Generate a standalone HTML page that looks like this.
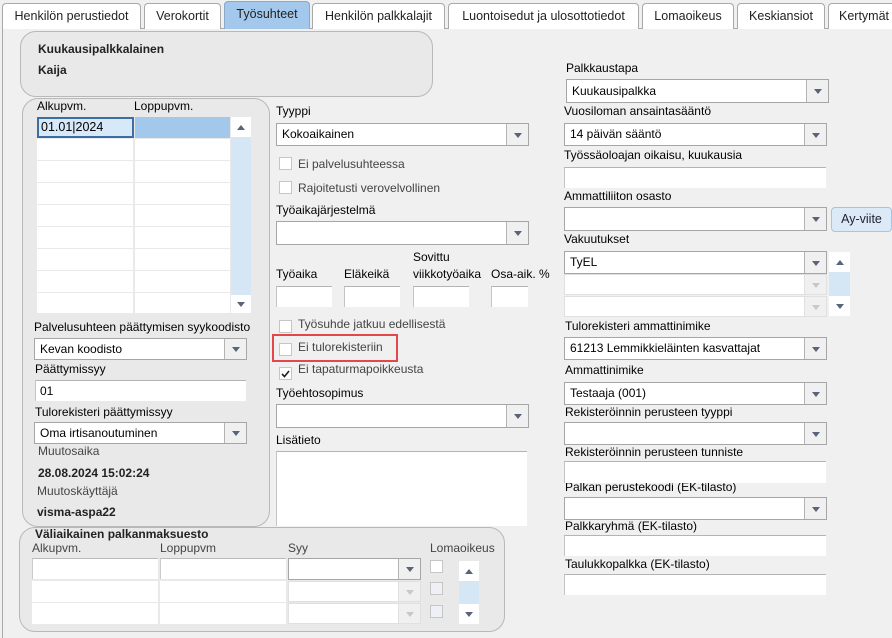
<!DOCTYPE html>
<html><head><meta charset="utf-8">
<style>
*{box-sizing:border-box;margin:0;padding:0}
body{width:892px;height:633px;overflow:hidden;background:#f0f0f0;font-family:"Liberation Sans",Arial,sans-serif;font-size:12px;color:#000;position:relative}
.a{position:absolute}
.tab{position:absolute;top:3px;height:26px;border:1px solid #a9a9a9;border-bottom:none;border-radius:4px 4px 0 0;background:#fff;text-align:center;line-height:24px;font-size:12.5px;color:#222}
.lbl{position:absolute;line-height:14px;white-space:nowrap}
.b{font-weight:bold;color:#222}
.g{color:#444}
.in{position:absolute;background:#fff;border-top:1px solid #b4b4b4;border-left:1px solid #c4c4c4}
.sel{position:absolute;background:#fff;border:1px solid #a6a6a6;padding-left:5px;line-height:20px;white-space:nowrap;overflow:hidden}
.sel::after{content:"";position:absolute;right:0;top:0;bottom:0;width:21px;border-left:1px solid #b4b4b4;background:#f0f0f0}
.sel::before{content:"";position:absolute;right:6px;top:50%;margin-top:-2px;border-left:4px solid transparent;border-right:4px solid transparent;border-top:5px solid #5a6478;z-index:2}
.sel.dis{border-color:#e0e0e0;}
.sel.dis::before{border-top-color:#c8c8c8}
.sel.dis::after{border-left-color:#e0e0e0}
.cb{position:absolute;width:13px;height:13px;background:#fff;border:1px solid #c6c6c6}
.cb.dis{background:#eef0f5}
.panel{position:absolute;background:#e9e9e9;border:1.5px solid #b8b8b8;border-radius:16px}
.cell{position:absolute;background:#fff}
.up::before,.dn::before{content:"";position:absolute;left:50%;margin-left:-4px;top:50%;margin-top:-2px;border-left:4px solid transparent;border-right:4px solid transparent}
.up::before{border-bottom:5px solid #5a6478}
.dn::before{border-top:5px solid #5a6478}
</style></head><body>
<div class="a" style="left:2px;top:28px;width:892px;height:610px;border-left:1px solid #a9a9a9;border-top:1px solid #a9a9a9"></div>
<div class="tab" style="left:2px;width:139px">Henkilön perustiedot</div>
<div class="tab" style="left:144px;width:77px">Verokortit</div>
<div class="tab" style="left:224px;width:86px;background:#a3c8ec;border-color:#8aa8c8;top:1px;height:28px">Työsuhteet</div>
<div class="tab" style="left:312px;width:133px">Henkilön palkkalajit</div>
<div class="tab" style="left:448px;width:191px">Luontoisedut ja ulosottotiedot</div>
<div class="tab" style="left:642px;width:92px">Lomaoikeus</div>
<div class="tab" style="left:737px;width:88px">Keskiansiot</div>
<div class="tab" style="left:828px;width:80px;text-align:left;padding-left:10px">Kertymät</div>

<div class="panel" style="left:20px;top:31px;width:413px;height:66px"></div>
<div class="lbl b" style="left:38px;top:42px">Kuukausipalkkalainen</div>
<div class="lbl b" style="left:38px;top:63px">Kaija</div>

<div class="panel" style="left:22px;top:98px;width:248px;height:429px"></div>
<div class="lbl" style="left:37px;top:99px">Alkupvm.</div>
<div class="lbl" style="left:134px;top:99px">Loppupvm.</div>
<div class="cell" style="left:37px;top:117px;width:97px;height:21px;background:#d7e8f8;border:2px solid #3a6ea5;padding-left:2px;line-height:17px;font-size:12.5px">01.01|2024</div>
<div class="cell" style="left:135px;top:117px;width:95px;height:21px;background:#a3c8ec"></div>
<div class="cell up" style="left:231px;top:117px;width:20px;height:20px"></div>
<div class="a" style="left:231px;top:137px;width:20px;height:158px;background:#d5e6f5"></div>
<div class="cell dn" style="left:231px;top:295px;width:20px;height:18px"></div>
<div class="cell" style="left:37px;top:139px;width:96px;height:21px"></div><div class="cell" style="left:135px;top:139px;width:95px;height:21px"></div>
<div class="cell" style="left:37px;top:161px;width:96px;height:21px"></div><div class="cell" style="left:135px;top:161px;width:95px;height:21px"></div>
<div class="cell" style="left:37px;top:183px;width:96px;height:21px"></div><div class="cell" style="left:135px;top:183px;width:95px;height:21px"></div>
<div class="cell" style="left:37px;top:205px;width:96px;height:21px"></div><div class="cell" style="left:135px;top:205px;width:95px;height:21px"></div>
<div class="cell" style="left:37px;top:227px;width:96px;height:21px"></div><div class="cell" style="left:135px;top:227px;width:95px;height:21px"></div>
<div class="cell" style="left:37px;top:249px;width:96px;height:21px"></div><div class="cell" style="left:135px;top:249px;width:95px;height:21px"></div>
<div class="cell" style="left:37px;top:271px;width:96px;height:21px"></div><div class="cell" style="left:135px;top:271px;width:95px;height:21px"></div>
<div class="cell" style="left:37px;top:293px;width:96px;height:20px"></div><div class="cell" style="left:135px;top:293px;width:95px;height:20px"></div>

<div class="lbl" style="left:34px;top:320px">Palvelusuhteen päättymisen syykoodisto</div>
<div class="sel" style="left:34px;top:338px;width:213px;height:22px">Kevan koodisto</div>
<div class="lbl" style="left:35px;top:362px">Päättymissyy</div>
<div class="in" style="left:35px;top:380px;width:211px;height:21px;padding-left:4px;line-height:20px">01</div>
<div class="lbl" style="left:35px;top:405px">Tulorekisteri päättymissyy</div>
<div class="sel" style="left:34px;top:422px;width:213px;height:22px">Oma irtisanoutuminen</div>
<div class="lbl g" style="left:38px;top:444px">Muutosaika</div>
<div class="lbl b" style="left:38px;top:466px">28.08.2024 15:02:24</div>
<div class="lbl g" style="left:37px;top:484px">Muutoskäyttäjä</div>
<div class="lbl b" style="left:37px;top:505px">visma-aspa22</div>

<div class="panel" style="left:19px;top:527px;width:486px;height:105px"></div>
<div class="lbl b" style="left:35px;top:527px">Väliaikainen palkanmaksuesto</div>
<div class="lbl g" style="left:32px;top:541px">Alkupvm.</div>
<div class="lbl g" style="left:160px;top:541px">Loppupvm</div>
<div class="lbl g" style="left:288px;top:541px">Syy</div>
<div class="lbl g" style="left:430px;top:541px">Lomaoikeus</div>
<div class="cell" style="left:32px;top:558px;width:126px;height:21px;border-top:1px solid #bbb;border-left:1px solid #ccc"></div>
<div class="cell" style="left:32px;top:581px;width:126px;height:21px"></div>
<div class="cell" style="left:32px;top:603px;width:126px;height:21px"></div>
<div class="cell" style="left:160px;top:558px;width:126px;height:21px;border-top:1px solid #bbb;border-left:1px solid #ccc"></div>
<div class="cell" style="left:160px;top:581px;width:126px;height:21px"></div>
<div class="cell" style="left:160px;top:603px;width:126px;height:21px"></div>
<div class="sel" style="left:288px;top:558px;width:133px;height:22px"></div>
<div class="sel dis" style="left:288px;top:581px;width:133px;height:21px"></div>
<div class="sel dis" style="left:288px;top:603px;width:133px;height:21px"></div>
<div class="cb" style="left:430px;top:560px"></div>
<div class="cb dis" style="left:430px;top:582px"></div>
<div class="cb dis" style="left:430px;top:605px"></div>
<div class="cell up" style="left:459px;top:561px;width:20px;height:20px"></div>
<div class="a" style="left:459px;top:581px;width:20px;height:23px;background:#d5e6f5"></div>
<div class="cell dn" style="left:459px;top:604px;width:20px;height:20px"></div>

<div class="lbl" style="left:276px;top:104px">Tyyppi</div>
<div class="sel" style="left:276px;top:123px;width:253px;height:23px;line-height:21px">Kokoaikainen</div>
<div class="cb" style="left:279px;top:157px"></div>
<div class="lbl g" style="left:298px;top:157px">Ei palvelusuhteessa</div>
<div class="cb" style="left:279px;top:181px"></div>
<div class="lbl g" style="left:298px;top:181px">Rajoitetusti verovelvollinen</div>
<div class="lbl" style="left:276px;top:203px">Työaikajärjestelmä</div>
<div class="sel" style="left:276px;top:221px;width:253px;height:24px"></div>
<div class="lbl" style="left:413px;top:250px">Sovittu</div>
<div class="lbl" style="left:276px;top:267px">Työaika</div>
<div class="lbl" style="left:344px;top:267px">Eläkeikä</div>
<div class="lbl" style="left:413px;top:267px">viikkotyöaika</div>
<div class="lbl" style="left:491px;top:267px">Osa-aik. %</div>
<div class="in" style="left:276px;top:286px;width:56px;height:21px"></div>
<div class="in" style="left:344px;top:286px;width:56px;height:21px"></div>
<div class="in" style="left:413px;top:286px;width:56px;height:21px"></div>
<div class="in" style="left:491px;top:286px;width:37px;height:21px"></div>
<div class="cb" style="left:279px;top:320px"></div>
<div class="lbl g" style="left:298px;top:317px">Työsuhde jatkuu edellisestä</div>
<div class="a" style="left:272px;top:334px;width:126px;height:28px;border:2px solid #e4474b"></div>
<div class="cb" style="left:279px;top:343px"></div>
<div class="lbl g" style="left:298px;top:340px">Ei tulorekisteriin</div>
<div class="cb" style="left:279px;top:367px"><svg width="11" height="11" style="position:absolute;left:0;top:0"><path d="M2 6 L4.5 8.5 L9 3" stroke="#222" stroke-width="1.6" fill="none"/></svg></div>
<div class="lbl g" style="left:298px;top:362px">Ei tapaturmapoikkeusta</div>
<div class="lbl" style="left:276px;top:386px">Työehtosopimus</div>
<div class="sel" style="left:276px;top:404px;width:253px;height:24px"></div>
<div class="lbl" style="left:276px;top:433px">Lisätieto</div>
<div class="in" style="left:276px;top:451px;width:251px;height:75px"></div>

<div class="lbl" style="left:566px;top:61px">Palkkaustapa</div>
<div class="sel" style="left:566px;top:79px;width:263px;height:24px;line-height:22px">Kuukausipalkka</div>
<div class="lbl" style="left:564px;top:104px">Vuosiloman ansaintasääntö</div>
<div class="sel" style="left:564px;top:123px;width:263px;height:23px;line-height:21px">14 päivän sääntö</div>
<div class="lbl" style="left:564px;top:148px">Työssäoloajan oikaisu, kuukausia</div>
<div class="in" style="left:564px;top:167px;width:262px;height:21px"></div>
<div class="lbl" style="left:564px;top:189px">Ammattiliiton osasto</div>
<div class="sel" style="left:564px;top:207px;width:263px;height:24px"></div>
<div class="a" style="left:831px;top:207px;width:61px;height:25px;background:#dce9f7;border:1px solid #a8c4e0;border-radius:4px;text-align:center;line-height:23px;font-size:12.5px;color:#223">Ay-viite</div>
<div class="lbl" style="left:564px;top:232px">Vakuutukset</div>
<div class="sel" style="left:564px;top:251px;width:263px;height:23px;line-height:21px">TyEL</div>
<div class="sel dis" style="left:564px;top:274px;width:263px;height:21px"></div>
<div class="sel dis" style="left:564px;top:296px;width:263px;height:21px"></div>
<div class="cell up" style="left:829px;top:252px;width:21px;height:20px"></div>
<div class="a" style="left:829px;top:272px;width:21px;height:24px;background:#d5e6f5"></div>
<div class="cell dn" style="left:829px;top:296px;width:21px;height:20px"></div>
<div class="lbl" style="left:565px;top:319px">Tulorekisteri ammattinimike</div>
<div class="sel" style="left:564px;top:337px;width:263px;height:23px;line-height:21px">61213 Lemmikkieläinten kasvattajat</div>
<div class="lbl" style="left:565px;top:363px">Ammattinimike</div>
<div class="sel" style="left:564px;top:382px;width:263px;height:23px;line-height:21px">Testaaja (001)</div>
<div class="lbl" style="left:565px;top:405px">Rekisteröinnin perusteen tyyppi</div>
<div class="sel" style="left:564px;top:422px;width:263px;height:23px"></div>
<div class="lbl" style="left:565px;top:445px">Rekisteröinnin perusteen tunniste</div>
<div class="lbl" style="left:565px;top:480px">Palkan perustekoodi (EK-tilasto)</div>
<div class="in" style="left:564px;top:461px;width:262px;height:22px"></div>
<div class="sel" style="left:564px;top:497px;width:263px;height:23px"></div>
<div class="lbl" style="left:565px;top:519px">Palkkaryhmä (EK-tilasto)</div>
<div class="in" style="left:564px;top:535px;width:262px;height:21px"></div>
<div class="lbl" style="left:565px;top:557px">Taulukkopalkka (EK-tilasto)</div>
<div class="in" style="left:564px;top:574px;width:262px;height:21px"></div>
</body></html>
